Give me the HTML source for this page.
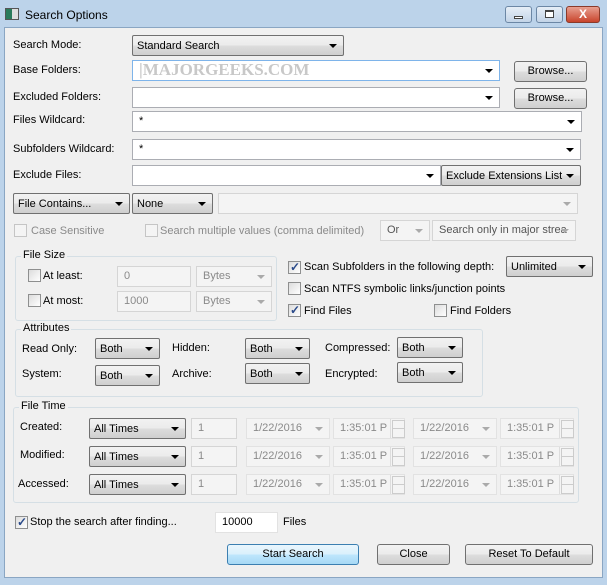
<!DOCTYPE html>
<html><head><meta charset="utf-8"><style>
*{box-sizing:border-box;margin:0;padding:0}
body{width:607px;height:585px;overflow:hidden;background:#bcd3ea;font-family:"Liberation Sans",sans-serif;font-size:11px;color:#000;position:relative}
.a{position:absolute}
.client{left:4px;top:27px;width:599px;height:551px;background:#f0f0f0;border:1px solid #8aa6c3}
.lbl{position:absolute;line-height:13px;white-space:nowrap}
.in{position:absolute;background:#fff;border:1px solid #abadb3;height:21px;padding:0 6px;line-height:19px;white-space:nowrap}
.dis{background:#f4f4f4;border-color:#d5d5d5;color:#8a8a8a}
.cb{position:absolute;height:21px;border:1px solid #707070;border-radius:2px;background:linear-gradient(#f2f2f2,#ebebeb 50%,#dddddd 51%,#cfcfcf);padding:0 4px;line-height:20px;white-space:nowrap}
.cb:after,.in.dd:after{content:"";position:absolute;right:6px;top:8px;border-left:4px solid transparent;border-right:4px solid transparent;border-top:4px solid #000}
.dis.dd:after{border-top-color:#aaa}
.btn{position:absolute;height:21px;border:1px solid #707070;border-radius:3px;background:linear-gradient(#f2f2f2,#ebebeb 50%,#dddddd 51%,#cfcfcf);text-align:center;line-height:19px}
.chk{position:absolute;width:13px;height:13px;border:1px solid #8e8f8f;background:linear-gradient(135deg,#dcdcdc,#fff)}
.chk.on:after{content:"✓";position:absolute;left:1px;top:-2px;font-size:12px;color:#2a4a8a;font-weight:bold}
.chk.d{border-color:#c5c5c5;background:#f4f4f4}
.grp{position:absolute;border:1px solid #d5dfe5;border-radius:3px}
.grp span{position:absolute;left:5px;top:-8px;background:#f0f0f0;padding:0 2px}
.g{color:#8a8a8a}
.spin{position:absolute;right:0;top:0;width:14px;height:19px;border-left:1px solid #ddd}
.spin:before,.spin:after{content:"";position:absolute;left:1px;width:11px;height:8px;border:1px solid #ccc;background:#f4f4f4}
.spin:before{top:1px}.spin:after{top:9px}
</style></head><body>
<div class="a" style="left:5px;top:8px;width:14px;height:12px;border:1px solid #555;background:linear-gradient(90deg,#2a7a5a 50%,#ddd 50%)"></div>
<div class="lbl" style="left:25px;top:9px;font-size:12px">Search Options</div>
<div class="a" style="left:505px;top:6px;width:27px;height:17px;border:1px solid #6c87a5;border-radius:3px;background:linear-gradient(#e6eef7,#c3d4e7)"><div class="a" style="left:8px;top:9px;width:9px;height:3px;border:1px solid #444;background:#fff"></div></div>
<div class="a" style="left:536px;top:6px;width:27px;height:17px;border:1px solid #6c87a5;border-radius:3px;background:linear-gradient(#e6eef7,#c3d4e7)"><div class="a" style="left:8px;top:3px;width:9px;height:8px;border:1px solid #444;border-top-width:2px;background:#fff"></div></div>
<div class="a" style="left:566px;top:6px;width:34px;height:17px;border:1px solid #8a3a2a;border-radius:3px;background:linear-gradient(#e8a090,#c8442c);color:#fff;text-align:center;font-weight:bold;font-size:12px;line-height:15px">X</div>
<div class="a client"></div>

<div class="lbl" style="left:13px;top:39px">Search Mode:</div>
<div class="cb" style="left:132px;top:35px;width:212px">Standard Search</div>
<div class="lbl" style="left:13px;top:64px">Base Folders:</div>
<div class="in dd" style="left:132px;top:60px;width:368px;border-color:#7eb4ea;line-height:18px"><span style="font-family:'Liberation Serif',serif;font-weight:bold;font-size:17px;color:#c8c8c8">|MAJORGEEKS.COM</span></div>
<div class="btn" style="left:514px;top:61px;width:73px">Browse...</div>
<div class="lbl" style="left:13px;top:91px">Excluded Folders:</div>
<div class="in dd" style="left:132px;top:87px;width:368px"></div>
<div class="btn" style="left:514px;top:88px;width:73px">Browse...</div>
<div class="lbl" style="left:13px;top:114px">Files Wildcard:</div>
<div class="in dd" style="left:132px;top:111px;width:450px">*</div>
<div class="lbl" style="left:13px;top:143px">Subfolders Wildcard:</div>
<div class="in dd" style="left:132px;top:139px;width:449px">*</div>
<div class="lbl" style="left:13px;top:169px">Exclude Files:</div>
<div class="in dd" style="left:132px;top:165px;width:309px"></div>
<div class="cb" style="left:441px;top:165px;width:140px">Exclude Extensions List</div>

<div class="cb" style="left:13px;top:193px;width:117px">File Contains...</div>
<div class="cb" style="left:132px;top:193px;width:81px">None</div>
<div class="in dis dd" style="left:218px;top:193px;width:360px"></div>
<div class="chk d" style="left:14px;top:224px"></div><div class="lbl g" style="left:31px;top:225px">Case Sensitive</div>
<div class="chk d" style="left:145px;top:224px"></div><div class="lbl g" style="left:160px;top:225px">Search multiple values (comma delimited)</div>
<div class="in dis dd" style="left:380px;top:220px;width:50px;color:#555">Or</div>
<div class="in dis dd" style="left:432px;top:220px;width:144px;color:#555;overflow:hidden">Search only in major strea</div>

<div class="grp" style="left:15px;top:256px;width:262px;height:65px"><span>File Size</span></div>
<div class="chk" style="left:28px;top:269px"></div><div class="lbl" style="left:43px;top:270px">At least:</div>
<div class="in dis" style="left:117px;top:266px;width:74px">0</div>
<div class="in dis dd" style="left:196px;top:266px;width:76px">Bytes</div>
<div class="chk" style="left:28px;top:294px"></div><div class="lbl" style="left:43px;top:295px">At most:</div>
<div class="in dis" style="left:117px;top:291px;width:74px">1000</div>
<div class="in dis dd" style="left:196px;top:291px;width:76px">Bytes</div>

<div class="chk on" style="left:288px;top:261px"></div><div class="lbl" style="left:304px;top:261px">Scan Subfolders in the following depth:</div>
<div class="cb" style="left:506px;top:256px;width:87px">Unlimited</div>
<div class="chk" style="left:288px;top:282px"></div><div class="lbl" style="left:304px;top:283px">Scan NTFS symbolic links/junction points</div>
<div class="chk on" style="left:288px;top:304px"></div><div class="lbl" style="left:304px;top:305px">Find Files</div>
<div class="chk" style="left:434px;top:304px"></div><div class="lbl" style="left:450px;top:305px">Find Folders</div>

<div class="grp" style="left:15px;top:329px;width:468px;height:68px"><span>Attributes</span></div>
<div class="lbl" style="left:22px;top:343px">Read Only:</div><div class="cb" style="left:95px;top:338px;width:65px">Both</div>
<div class="lbl" style="left:172px;top:342px">Hidden:</div><div class="cb" style="left:245px;top:338px;width:65px">Both</div>
<div class="lbl" style="left:325px;top:342px">Compressed:</div><div class="cb" style="left:397px;top:337px;width:66px">Both</div>
<div class="lbl" style="left:22px;top:368px">System:</div><div class="cb" style="left:95px;top:365px;width:65px">Both</div>
<div class="lbl" style="left:172px;top:368px">Archive:</div><div class="cb" style="left:245px;top:363px;width:65px">Both</div>
<div class="lbl" style="left:325px;top:368px">Encrypted:</div><div class="cb" style="left:397px;top:362px;width:66px">Both</div>

<div class="grp" style="left:13px;top:407px;width:566px;height:96px"><span>File Time</span></div>
<div class="lbl" style="left:20px;top:421px">Created:</div>
<div class="lbl" style="left:20px;top:449px">Modified:</div>
<div class="lbl" style="left:18px;top:478px">Accessed:</div>
<div class="cb" style="left:89px;top:418px;width:97px">All Times</div>
<div class="cb" style="left:89px;top:446px;width:97px">All Times</div>
<div class="cb" style="left:89px;top:474px;width:97px">All Times</div>
<div class="in dis" style="left:191px;top:418px;width:46px">1</div>
<div class="in dis" style="left:191px;top:446px;width:46px">1</div>
<div class="in dis" style="left:191px;top:474px;width:46px">1</div>
<div class="in dis dd" style="left:246px;top:418px;width:84px;border-color:#e2e2e2">1/22/2016</div>
<div class="in dis dd" style="left:246px;top:446px;width:84px;border-color:#e2e2e2">1/22/2016</div>
<div class="in dis dd" style="left:246px;top:474px;width:84px;border-color:#e2e2e2">1/22/2016</div>
<div class="in dis" style="left:333px;top:418px;width:72px;border-color:#e2e2e2">1:35:01 P<div class="spin"></div></div>
<div class="in dis" style="left:333px;top:446px;width:72px;border-color:#e2e2e2">1:35:01 P<div class="spin"></div></div>
<div class="in dis" style="left:333px;top:474px;width:72px;border-color:#e2e2e2">1:35:01 P<div class="spin"></div></div>
<div class="in dis dd" style="left:413px;top:418px;width:84px;border-color:#e2e2e2">1/22/2016</div>
<div class="in dis dd" style="left:413px;top:446px;width:84px;border-color:#e2e2e2">1/22/2016</div>
<div class="in dis dd" style="left:413px;top:474px;width:84px;border-color:#e2e2e2">1/22/2016</div>
<div class="in dis" style="left:500px;top:418px;width:74px;border-color:#e2e2e2">1:35:01 P<div class="spin"></div></div>
<div class="in dis" style="left:500px;top:446px;width:74px;border-color:#e2e2e2">1:35:01 P<div class="spin"></div></div>
<div class="in dis" style="left:500px;top:474px;width:74px;border-color:#e2e2e2">1:35:01 P<div class="spin"></div></div>

<div class="chk on" style="left:15px;top:516px"></div><div class="lbl" style="left:30px;top:516px">Stop the search after finding...</div>
<div class="in" style="left:215px;top:512px;width:63px;border-color:#e2e2e2">10000</div>
<div class="lbl" style="left:283px;top:516px">Files</div>

<div class="btn" style="left:227px;top:544px;width:132px;border-color:#3c7fb1;background:linear-gradient(#eaf6fd,#d9f0fc 50%,#bee6fd 51%,#a7d9f5)">Start Search</div>
<div class="btn" style="left:377px;top:544px;width:73px">Close</div>
<div class="btn" style="left:465px;top:544px;width:128px">Reset To Default</div>
</body></html>
